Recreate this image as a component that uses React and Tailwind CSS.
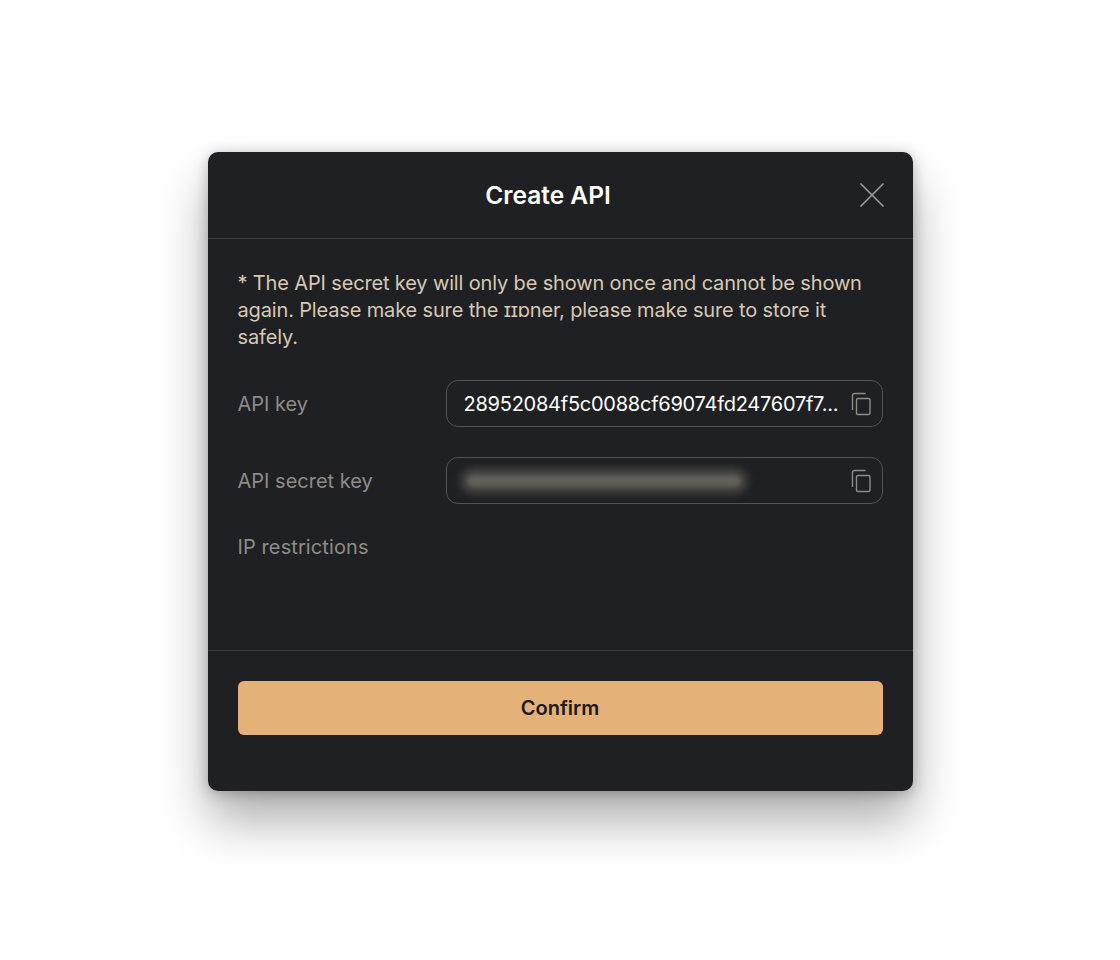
import React from 'react';

const CopyIcon = () => (
    <svg width="22" height="24" viewBox="0 0 22 24" fill="none" stroke="#8f8d88" strokeWidth="1.4" className="shrink-0">
        <rect x="6.5" y="6.5" width="13.5" height="16" rx="1.5" />
        <path d="M2.5 18V3.5C2.5 2.4 3.4 1.5 4.5 1.5H15.5" />
    </svg>
);

const CloseIcon = () => (
    <svg width="26" height="26" viewBox="0 0 26 26" fill="none" stroke="#a5a39e" strokeWidth="1.5">
        <path d="M1.5 1.5L24.5 24.5M24.5 1.5L1.5 24.5" />
    </svg>
);

const App = () => {
    return (
        <div className="w-[1120px] h-[960px] bg-white flex justify-center pt-[152px] font-['Inter',sans-serif]">
            <div className="w-[705px] h-[639px] flex flex-col bg-[#1f2023] rounded-[10px] shadow-[0_30px_50px_rgba(0,0,0,0.32),0_2px_14px_rgba(0,0,0,0.25)]">
                <div className="h-[87px] shrink-0 flex items-center justify-center relative border-b border-[#3d3d3f]">
                    <h1 className="text-[24.5px] leading-[30px] font-semibold text-white pr-[24px]">Create API</h1>
                    <button className="absolute right-[28px] top-[30px]">
                        <CloseIcon />
                    </button>
                </div>
                <div className="flex-1 px-[30px] pt-[31px]">
                    <p className="text-[20px] leading-[27px] tracking-[-0.15px] text-[#d8c8b3]">
                        * The API secret key will only be shown once and cannot be shown again. Please make sure the ɪɪɒner, please make sure to store it safely.
                    </p>
                    <div className="mt-[29px] flex items-center">
                        <span className="w-[208px] shrink-0 text-[20px] text-[#8f8c86]">API key</span>
                        <div className="w-[437px] h-[47px] flex items-center justify-between pl-[17px] pr-[10px] border border-[#55534f] rounded-[12px]">
                            <span className="text-[20px] tracking-[-0.25px] text-white whitespace-nowrap">28952084f5c0088cf69074fd247607f7...</span>
                            <CopyIcon />
                        </div>
                    </div>
                    <div className="mt-[30px] flex items-center">
                        <span className="w-[208px] shrink-0 text-[20px] text-[#8f8c86]">API secret key</span>
                        <div className="w-[437px] h-[47px] flex items-center justify-between pl-[20px] pr-[10px] border border-[#55534f] rounded-[12px]">
                            <div className="w-[274px] h-[12px] rounded-full bg-[#625f57] shadow-[0_0_6px_7px_#454442] blur-[2px]" />
                            <CopyIcon />
                        </div>
                    </div>
                    <div className="mt-[29px] text-[20px] leading-[28px] tracking-[0.1px] text-[#8f8c86]">IP restrictions</div>
                </div>
                <div className="h-[141px] shrink-0 border-t border-[#3d3d3f] px-[30px] pt-[30px]">
                    <button className="w-full h-[54px] rounded-[6px] bg-[#e4b279] text-[20px] font-semibold text-[#1a1a1c]">
                        Confirm
                    </button>
                </div>
            </div>
        </div>
    );
};

export default App;
